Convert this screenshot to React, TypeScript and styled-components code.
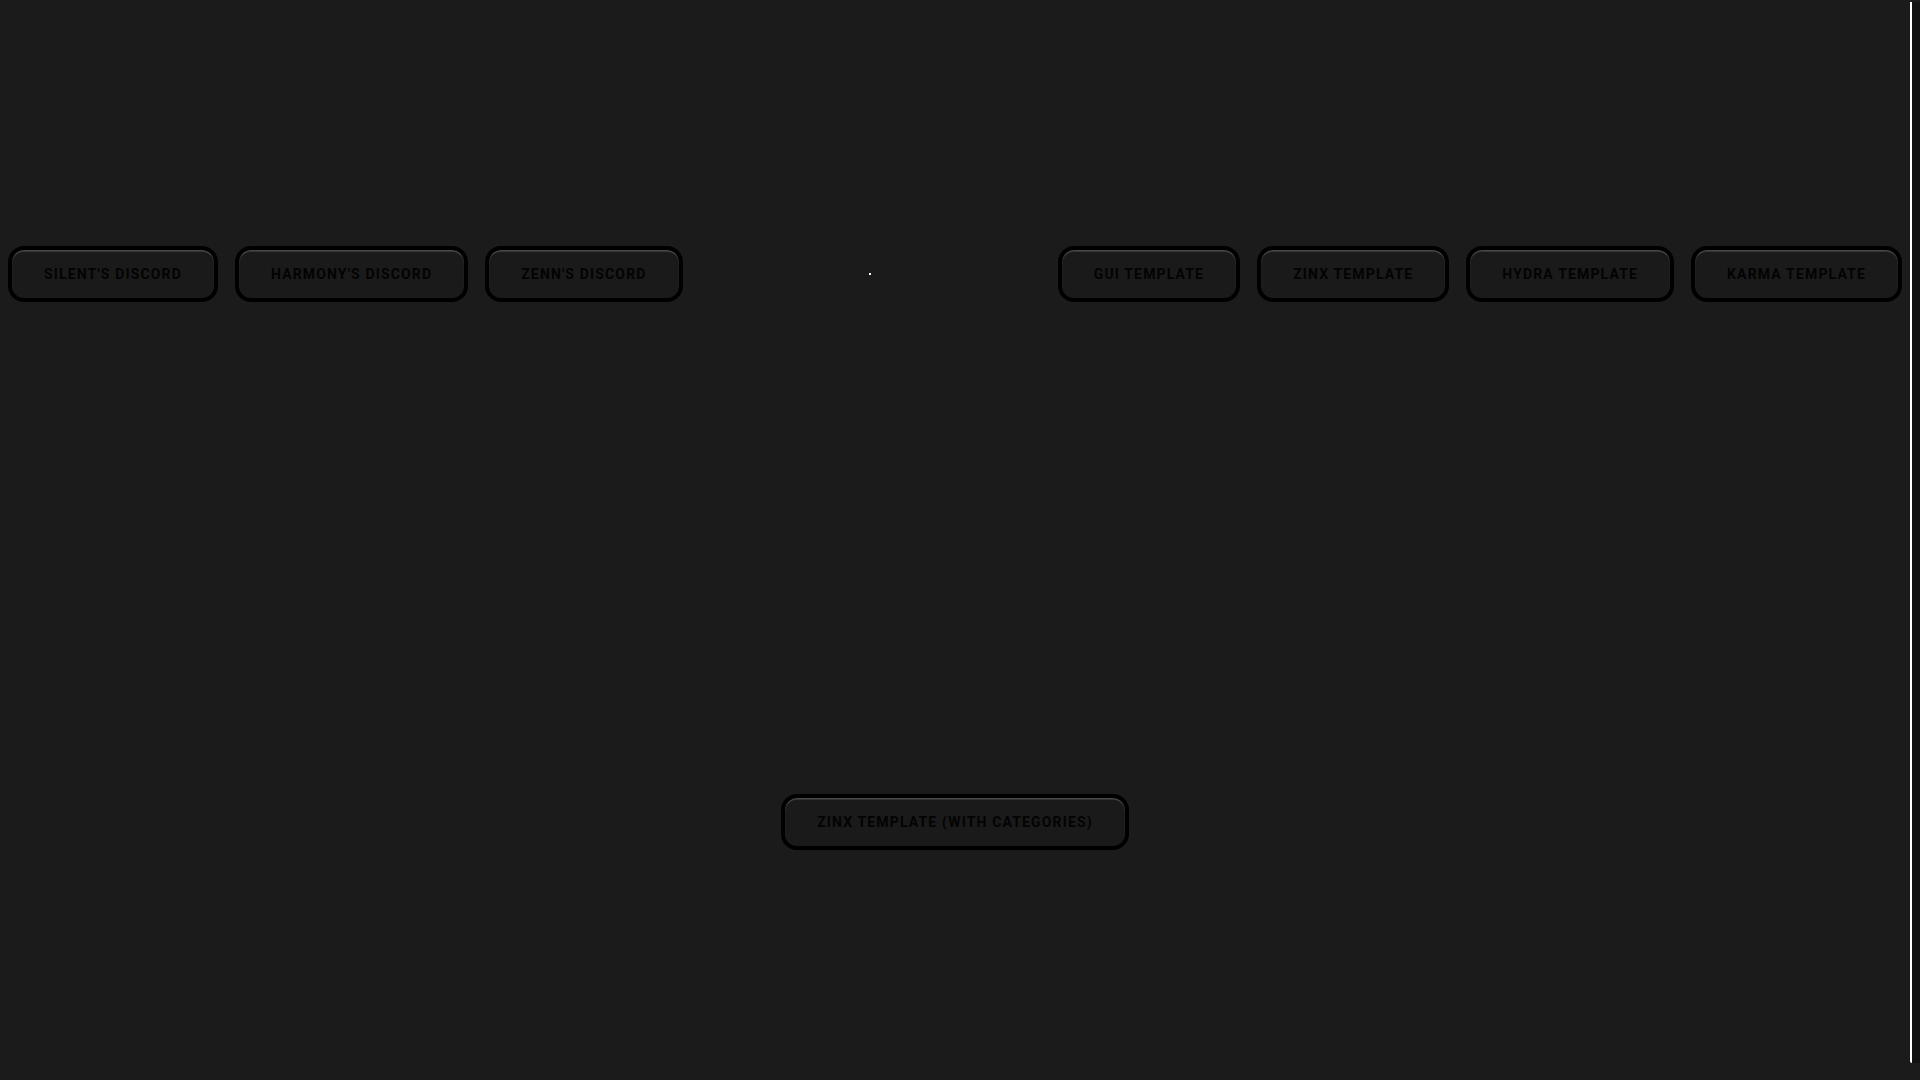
import React from "react";
import styled, { createGlobalStyle } from "styled-components";

const GlobalStyle = createGlobalStyle`
  html, body {
    margin: 0;
    padding: 0;
    background: #1b1b1b;
    overflow: hidden;
  }
  body {
    font-family: Roboto, "Noto Sans", sans-serif;
  }
`;

const Frame = styled.div`
  height: 100vh;
  display: flex;
  background: #1b1b1b;
`;

const Page = styled.main`
  flex: 1;
  min-width: 0;
  box-sizing: border-box;
  padding: 246px 8px 0;
  display: flex;
  flex-direction: column;
  align-items: center;
`;

// the page's scrollbar, drawn since the screenshot browser hides real ones
const Rail = styled.aside`
  width: 10px;
  flex: none;
  padding: 2px 0 17px;
  box-sizing: border-box;
  display: flex;
`;

const Thumb = styled.div`
  flex: 1;
  background: #121212;
  border-left: 2px solid #ffffff;
  border-radius: 0 0 2px 2px;
`;

const TopBar = styled.nav`
  width: 100%;
  display: flex;
  align-items: center;
  justify-content: space-between;
`;

const Group = styled.div`
  display: flex;
  align-items: center;
  gap: 17px;
`;

const Logo = styled.span`
  width: 2px;
  height: 2px;
  background: #ffffff;
`;

const Button = styled.button`
  height: 56px;
  box-sizing: border-box;
  padding: 0 32px;
  border: 4px solid #000000;
  border-radius: 16px;
  background: #1a1a1a;
  box-shadow: inset 0 1.5px 1px rgba(255, 255, 255, 0.22);
  color: #030303;
  font-family: Roboto, "Noto Sans", sans-serif;
  font-size: 14px;
  font-weight: 700;
  letter-spacing: 1.15px;
  text-transform: uppercase;
  white-space: nowrap;
  cursor: pointer;
`;

const Bottom = styled.div`
  margin-top: 492px;
  display: flex;
  justify-content: center;
`;

const discords = ["Silent's Discord", "Harmony's Discord", "Zenn's Discord"];
const templates = ["GUI Template", "Zinx Template", "Hydra Template", "Karma Template"];

const App = () => {
  return (
    <>
      <GlobalStyle />
      <Frame>
        <Page>
          <TopBar>
            <Group>
              {discords.map((d) => (
                <Button key={d}>{d}</Button>
              ))}
            </Group>
            <Logo />
            <Group>
              {templates.map((t) => (
                <Button key={t}>{t}</Button>
              ))}
            </Group>
          </TopBar>
          <Bottom>
            <Button>Zinx Template (With Categories)</Button>
          </Bottom>
        </Page>
        <Rail>
          <Thumb />
        </Rail>
      </Frame>
    </>
  );
};

export default App;
